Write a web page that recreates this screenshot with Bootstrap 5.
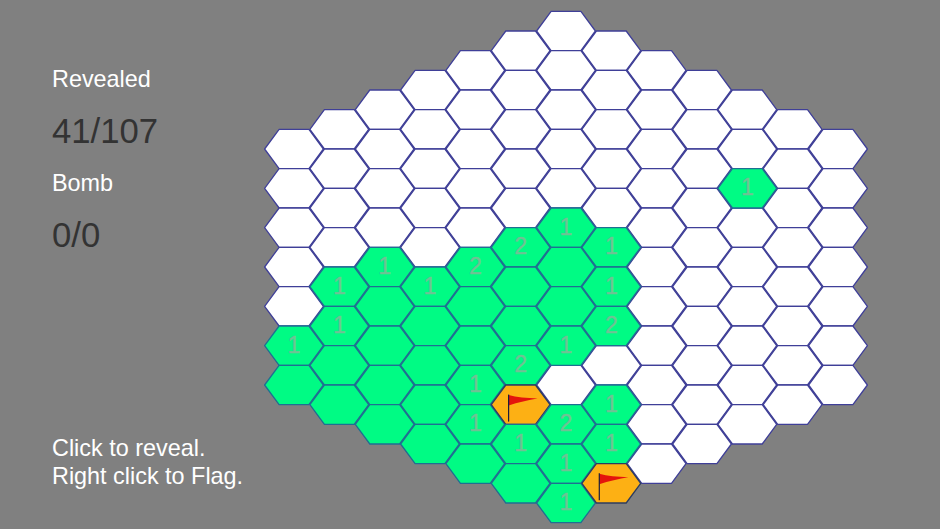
<!DOCTYPE html>
<html lang="en">
<head>
<meta charset="utf-8">
<title>Hex Minesweeper</title>
<link href="https://cdn.jsdelivr.net/npm/bootstrap@5.3.0/dist/css/bootstrap.min.css" rel="stylesheet">
<style>
html,body{height:100%;margin:0;overflow:hidden;background:#808080;}
body{font-family:"Liberation Sans",Arial,sans-serif;}
.game-shell{width:940px;height:529px;background:#808080;}
.side-panel{width:260px;flex:none;padding:53px 0 39px 52px;}
.stat-label{font-size:23.4px;line-height:52px;height:52px;color:#fff;margin:0;}
.stat-value{font-size:34.7px;line-height:52px;height:52px;color:#333;margin:0;}
.help-text{font-size:23.4px;line-height:28px;color:#fff;margin:0;white-space:nowrap;}
.board{width:680px;height:529px;flex:none;display:block;}
.hx{stroke:#3f3f98;stroke-width:1.3;stroke-linejoin:round;}
.hx-hidden{fill:#fff;}
.hx-open{fill:#00fb84;stroke:#1f6f92;}
.hx-flag{fill:#fdb014;stroke:#2c3c60;}
.hx-num{font-family:"Liberation Sans",Arial,sans-serif;font-size:23px;fill:#6fc294;stroke:#6fc294;stroke-width:.4;text-anchor:middle;}
.flag-pole{stroke:#1d1d3a;stroke-width:1.2;}
.flag-cloth{fill:#e4140c;}
</style>
</head>
<body>
<div class="game-shell d-flex">
  <div class="side-panel d-flex flex-column justify-content-between">
    <div>
      <p class="stat-label">Revealed</p>
      <p class="stat-value">41/107</p>
      <p class="stat-label">Bomb</p>
      <p class="stat-value">0/0</p>
    </div>
    <p class="help-text">Click to reveal.<br>Right click to Flag.</p>
  </div>
  <svg id="board" class="board" viewBox="260 0 680 529" xmlns="http://www.w3.org/2000/svg" aria-label="Game board"></svg>
</div>
<script>
(function(){
  var NS='http://www.w3.org/2000/svg',svg=document.getElementById('board');
  var DX=45.33,DY=39.33,HW=29.4,TW=14.9,HH=19.67;
  function el(n,a,t){var e=document.createElementNS(NS,n);for(var k in a)e.setAttribute(k,a[k]);if(t!=null)e.textContent=t;return e;}
  // column -> { approximate y centre : value }; 0 = blank open, n = number, 'f' = flag
  var cells={
    0:{346:1,385:0},
    1:{287:1,326:1,365:0,405:0},
    2:{267:1,306:0,346:0,385:0,424:0},
    3:{287:1,326:0,365:0,405:0,444:0},
    4:{267:2,306:0,346:0,385:1,424:1,464:0},
    5:{247:2,287:0,326:0,365:2,405:'f',444:1,483:0},
    6:{228:1,267:0,306:0,346:1,424:2,464:1,503:1},
    7:{247:1,287:1,326:2,405:1,444:1,483:'f'},
    10:{188:1}
  };
  var layers=[[],[],[]];
  for(var c=0;c<13;c++){
    var off=Math.abs(c-6),n=13-off,x=294+c*DX,col=cells[c]||{};
    for(var r=0;r<n;r++){
      var y=31+off*DY/2+r*DY,v=undefined;
      for(var k in col){if(Math.abs(+k-y)<2){v=col[k];}}
      var cls=v===undefined?'hx-hidden':(v==='f'?'hx-flag':'hx-open');
      var pts=[[x-HW,y],[x-TW,y-HH],[x+TW,y-HH],[x+HW,y],[x+TW,y+HH],[x-TW,y+HH]].map(function(p){return p[0].toFixed(1)+','+p[1].toFixed(1)}).join(' ');
      layers[v===undefined?0:1].push(el('polygon',{'class':'hx '+cls,points:pts}));
      if(v==='f'){
        var g=el('g',{transform:'translate('+x.toFixed(1)+' '+y.toFixed(1)+')'});
        g.appendChild(el('path',{'class':'flag-cloth',d:'M-12-9.5C-4-7 6-6.5 17-6C8-4.5-3-2-12 1Z'}));
        g.appendChild(el('line',{'class':'flag-pole',x1:-12,y1:-10,x2:-12,y2:17}));
        layers[2].push(g);
      }else if(v){
        layers[2].push(el('text',{'class':'hx-num',x:x.toFixed(1),y:(y+7).toFixed(1)},v));
      }
    }
  }
  layers.forEach(function(l){l.forEach(function(e){svg.appendChild(e);});});
})();
</script>
<script src="https://cdn.jsdelivr.net/npm/bootstrap@5.3.0/dist/js/bootstrap.bundle.min.js"></script>
</body>
</html>
